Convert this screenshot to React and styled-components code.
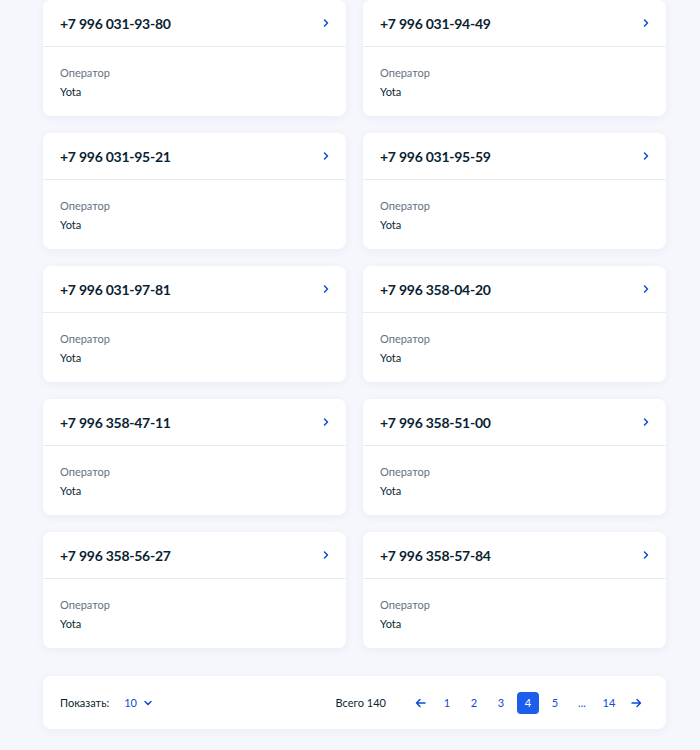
import React from 'react';
import styled, { createGlobalStyle } from 'styled-components';

const GlobalStyle = createGlobalStyle`
  html, body {
    margin: 0;
    padding: 0;
    background: #f5f7fc;
    font-family: Lato, "Noto Sans", sans-serif;
  }
`;

const Page = styled.div`
  width: 623px;
  padding: 0 0 20px 43px;
  display: flex;
  flex-direction: column;
  gap: 28px;
`;

const Grid = styled.div`
  display: grid;
  grid-template-columns: 1fr 1fr;
  column-gap: 17px;
  row-gap: 17px;
`;

const Card = styled.div`
  background: #fff;
  border-radius: 8px;
  height: 116px;
  box-shadow: 0 2px 8px rgba(40, 70, 130, 0.06);
  display: flex;
  flex-direction: column;
`;

const CardHead = styled.div`
  height: 46px;
  border-bottom: 1px solid #e5ecf8;
  display: flex;
  align-items: center;
  justify-content: space-between;
  padding: 0 15px 0 17px;
`;

const Phone = styled.span`
  font-size: 14px;
  font-weight: 700;
  color: #0b1f33;
  letter-spacing: -0.25px;
`;

const CardBody = styled.div`
  padding: 19px 17px 0;
  display: flex;
  flex-direction: column;
  gap: 5px;
`;

const Label = styled.span`
  font-size: 11px;
  color: #66727f;
  line-height: 14px;
`;

const Value = styled.span`
  font-size: 11px;
  color: #0b1f33;
  line-height: 14px;
`;

const Pager = styled.div`
  background: #fff;
  border-radius: 8px;
  height: 53px;
  box-shadow: 0 2px 8px rgba(40, 70, 130, 0.06);
  display: flex;
  align-items: center;
  justify-content: space-between;
  padding: 0 19px 0 17px;
`;

const ShowBox = styled.div`
  display: flex;
  align-items: center;
  font-size: 11px;
  color: #0b1f33;
`;

const Select = styled.span`
  display: flex;
  align-items: center;
  gap: 6px;
  color: #0d4cd3;
  margin-left: 15px;
`;

const Pages = styled.div`
  display: flex;
  align-items: center;
  gap: 5px;
  font-size: 11px;
`;

const Total = styled.span`
  color: #0b1f33;
  margin-right: 18px;
`;

const PageBtn = styled.span`
  width: 22px;
  height: 22px;
  border-radius: 4px;
  display: flex;
  align-items: center;
  justify-content: center;
  color: ${p => (p.$active ? '#fff' : '#0d4cd3')};
  background: ${p => (p.$active ? '#1d5deb' : 'transparent')};
`;

const Chevron = () => (
  <svg width="10" height="10" viewBox="0 0 10 10">
    <path d="M3.5 2 L6.5 5 L3.5 8" fill="none" stroke="#0d4cd3" strokeWidth="1.5" strokeLinecap="round" strokeLinejoin="round" />
  </svg>
);

const ChevronDown = () => (
  <svg width="10" height="10" viewBox="0 0 10 10">
    <path d="M2 3.5 L5 6.5 L8 3.5" fill="none" stroke="#0d4cd3" strokeWidth="1.5" strokeLinecap="round" strokeLinejoin="round" />
  </svg>
);

const Arrow = ({ left }) => (
  <svg width="11" height="10" viewBox="0 0 11 10" style={{ transform: left ? 'scaleX(-1)' : 'none' }}>
    <path d="M1 5 H9.5 M6 1.5 L9.5 5 L6 8.5" fill="none" stroke="#0d4cd3" strokeWidth="1.5" strokeLinecap="round" strokeLinejoin="round" />
  </svg>
);

const phones = [
  '+7 996 031-93-80', '+7 996 031-94-49',
  '+7 996 031-95-21', '+7 996 031-95-59',
  '+7 996 031-97-81', '+7 996 358-04-20',
  '+7 996 358-47-11', '+7 996 358-51-00',
  '+7 996 358-56-27', '+7 996 358-57-84',
];

const App = () => (
  <>
    <GlobalStyle />
    <Page>
      <Grid>
        {phones.map(n => (
          <Card key={n}>
            <CardHead>
              <Phone>{n}</Phone>
              <Chevron />
            </CardHead>
            <CardBody>
              <Label>Оператор</Label>
              <Value>Yota</Value>
            </CardBody>
          </Card>
        ))}
      </Grid>
      <Pager>
        <ShowBox>
          Показать:
          <Select>10 <ChevronDown /></Select>
        </ShowBox>
        <Pages>
          <Total>Всего 140</Total>
          <PageBtn><Arrow left /></PageBtn>
          {['1', '2', '3', '4', '5', '...', '14'].map(p => (
            <PageBtn key={p} $active={p === '4'}>{p}</PageBtn>
          ))}
          <PageBtn><Arrow /></PageBtn>
        </Pages>
      </Pager>
    </Page>
  </>
);

export default App;
